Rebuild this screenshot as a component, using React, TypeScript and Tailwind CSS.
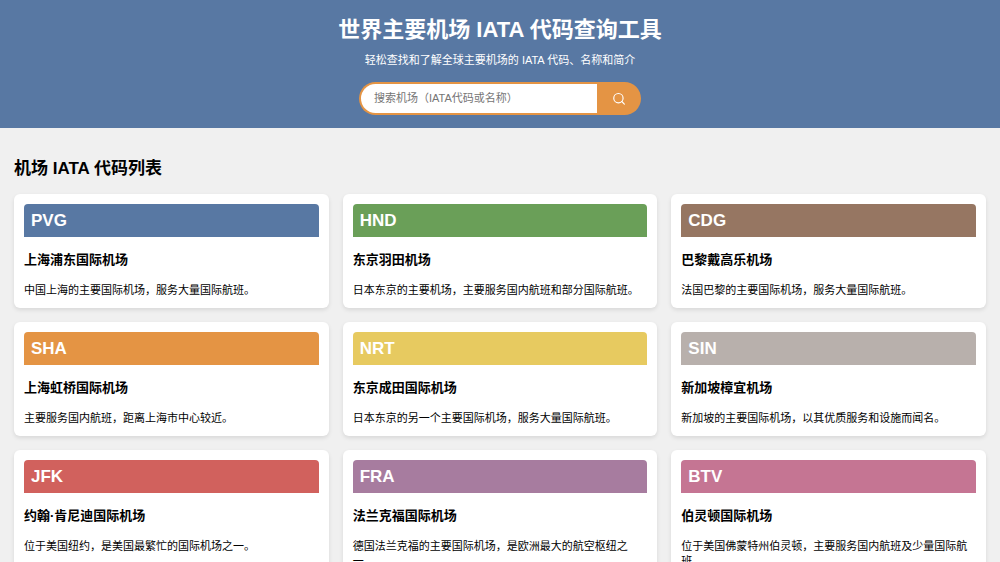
import React from 'react';

interface Airport {
  code: string;
  name: string;
  description: string;
  color: string;
}

const airports: Airport[] = [
  { code: 'PVG', name: '上海浦东国际机场', description: '中国上海的主要国际机场，服务大量国际航班。', color: 'bg-[#5878a3]' },
  { code: 'HND', name: '东京羽田机场', description: '日本东京的主要机场，主要服务国内航班和部分国际航班。', color: 'bg-[#6a9f58]' },
  { code: 'CDG', name: '巴黎戴高乐机场', description: '法国巴黎的主要国际机场，服务大量国际航班。', color: 'bg-[#967662]' },
  { code: 'SHA', name: '上海虹桥国际机场', description: '主要服务国内航班，距离上海市中心较近。', color: 'bg-[#e49444]' },
  { code: 'NRT', name: '东京成田国际机场', description: '日本东京的另一个主要国际机场，服务大量国际航班。', color: 'bg-[#e7ca60]' },
  { code: 'SIN', name: '新加坡樟宜机场', description: '新加坡的主要国际机场，以其优质服务和设施而闻名。', color: 'bg-[#b8b0ac]' },
  { code: 'JFK', name: '约翰·肯尼迪国际机场', description: '位于美国纽约，是美国最繁忙的国际机场之一。', color: 'bg-[#d1615d]' },
  { code: 'FRA', name: '法兰克福国际机场', description: '德国法兰克福的主要国际机场，是欧洲最大的航空枢纽之一。', color: 'bg-[#a77c9f]' },
  { code: 'BTV', name: '伯灵顿国际机场', description: '位于美国佛蒙特州伯灵顿，主要服务国内航班及少量国际航班。', color: 'bg-[#c57593]' },
];

const SearchIcon = () => (
  <svg className="size-3.5" viewBox="0 0 24 24" fill="none" stroke="currentColor" strokeWidth="2" strokeLinecap="round" strokeLinejoin="round">
    <circle cx="11" cy="10.5" r="8" />
    <path d="m16.8 16.3 4.4 4.4" />
  </svg>
);

const AirportCard = ({ airport }: { airport: Airport }) => (
  <article className="rounded-md bg-white p-2.5 shadow-[0_2px_4px_rgba(0,0,0,0.1)]">
    <div className={`rounded-t-sm px-[7px] text-[17px] leading-[33px] font-bold text-white ${airport.color}`}>
      {airport.code}
    </div>
    <h3 className="mt-3.5 text-[13px] leading-[18px] font-bold">{airport.name}</h3>
    <p className="mt-3.5 text-[11px] leading-[15px]">{airport.description}</p>
  </article>
);

const App = () => {
  return (
    <div className="min-h-screen bg-[#f0f0f0] text-black font-['Liberation_Sans','Noto_Sans_CJK_SC',sans-serif]">
      <header className="flex flex-col items-center bg-[#5878a3] px-3.5 pt-3.5 pb-[13px] text-white">
        <h1 className="text-[22px] leading-[32px] font-bold">世界主要机场 IATA 代码查询工具</h1>
        <p className="mt-1.5 text-[11px] leading-[16px]">轻松查找和了解全球主要机场的 IATA 代码、名称和简介</p>
        <form className="mt-3.5 flex h-[33px] w-[282px]" onSubmit={(e) => e.preventDefault()}>
          <input
            type="text"
            aria-label="搜索机场"
            placeholder="搜索机场（IATA代码或名称）"
            className="min-w-0 flex-1 rounded-l-full border-2 border-r-0 border-[#e49444] bg-white px-[13px] text-[11px] text-black outline-none placeholder:text-[#757575]"
          />
          <button type="submit" aria-label="搜索" className="flex w-11 items-center justify-center rounded-r-full bg-[#e49444] text-white">
            <SearchIcon />
          </button>
        </form>
      </header>

      <main className="px-3.5 pt-[29px] pb-7">
        <h2 className="text-[17px] leading-[24px] font-bold">机场 IATA 代码列表</h2>
        <div className="mt-[13px] grid grid-cols-3 gap-3.5">
          {airports.map((airport) => (
            <AirportCard key={airport.code} airport={airport} />
          ))}
        </div>
      </main>
    </div>
  );
};

export default App;
